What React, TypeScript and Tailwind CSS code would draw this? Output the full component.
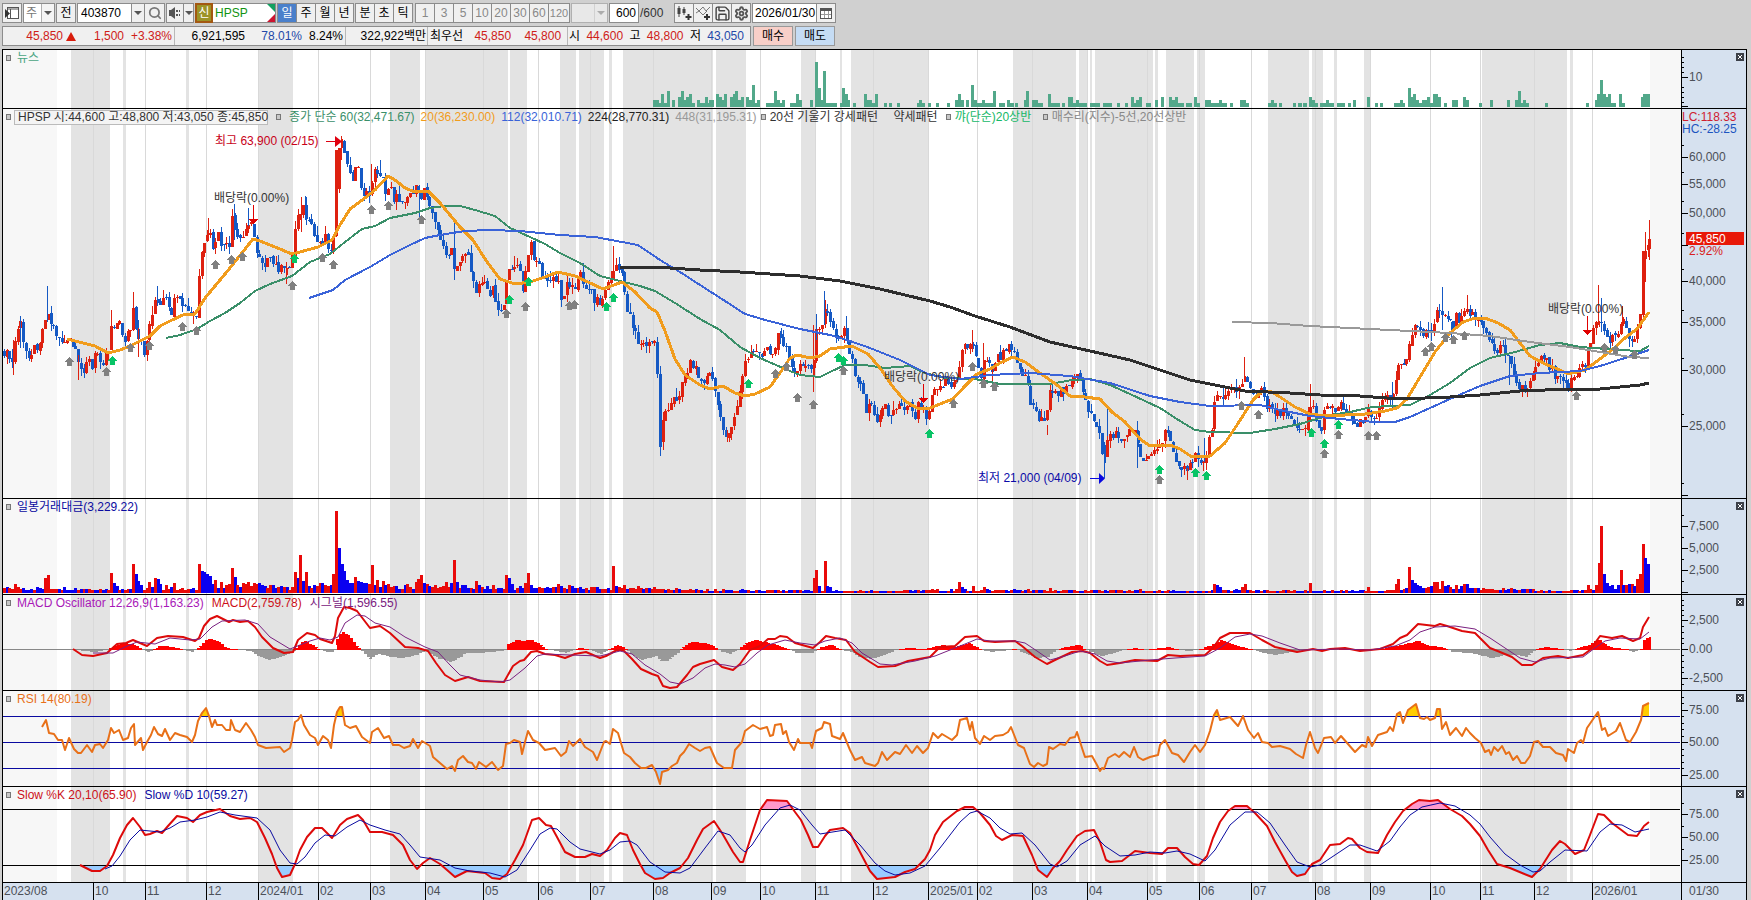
import React from "react";
import { Search, Settings, Save } from "lucide-react";

type Pt = [number, number];

const LEFT = 3;
const WIDTH = 1678;
const STEP = 2.7446;
const BARS = 600;

const parse = (text: string): Pt[] =>
  text
    .trim()
    .split(/\s+/)
    .map((pair) => pair.split(",").map(Number) as Pt);

const noise = (n: number) => {
  const v = Math.sin(n * 12.9898) * 43758.5453;
  return v - Math.floor(v);
};

const valueAt = (pts: Pt[], x: number) => {
  if (x <= pts[0][0]) return pts[0][1];
  for (let i = 1; i < pts.length; i++) {
    if (x <= pts[i][0]) {
      const [x0, y0] = pts[i - 1];
      const [x1, y1] = pts[i];
      return y0 + ((y1 - y0) * (x - x0)) / (x1 - x0 || 1);
    }
  }
  return pts[pts.length - 1][1];
};

const percent = (x: number) => `${((x - LEFT) / WIDTH) * 100}%`;

// shaded market phases: x start, x end
const BANDS = parse(`71,110 123,126 186,189 258,293 390,420 425,508 510,527 560,576 579,604 609,612
623,713 716,746 801,816 840,842 851,929 1013,1076 1079,1088 1090,1092 1095,1153 1155,1158 1166,1194
1197,1205 1268,1309 1312,1323 1334,1337 1364,1371 1482,1567 1570,1573`);

const MONTHS: [number, string][] = [
  [3, "2023/08"], [93, "10"], [145, "11"], [206, "12"], [258, "2024/01"], [318, "02"], [370, "03"],
  [425, "04"], [483, "05"], [538, "06"], [590, "07"], [653, "08"], [711, "09"], [760, "10"],
  [815, "11"], [873, "12"], [928, "2025/01"], [977, "02"], [1032, "03"], [1087, "04"], [1147, "05"],
  [1199, "06"], [1251, "07"], [1315, "08"], [1370, "09"], [1430, "10"], [1480, "11"], [1534, "12"],
  [1592, "2026/01"],
];

// x,width,height
const NEWS = `653,6,7 661,3,13 659,8,4 667,3,16 672,3,7 678,3,10 681,3,16 684,7,7 686,5,10 689,3,13 692,3,4
697,3,7 700,14,4 705,3,10 709,5,7 716,3,13 719,3,10 721,3,7 724,3,13 730,3,10 733,3,13 735,3,16 738,6,7
741,3,10 746,3,10 749,3,7 752,3,22 755,5,4 757,3,7 766,8,4 774,3,16 777,3,7 779,3,4 782,3,7 790,6,4
796,3,13 799,3,7 810,3,7 815,3,45 818,3,19 820,3,7 823,3,36 826,11,4 840,3,4 842,3,19 845,3,13 847,3,7
853,3,4 864,3,13 867,5,7 872,3,4 875,3,13 884,3,4 889,3,4 897,3,4 917,8,4 919,3,7 928,3,4 936,3,4
947,3,4 955,3,7 958,3,13 961,3,7 966,3,7 971,3,22 974,3,7 976,6,4 982,3,7 985,8,4 993,3,16 999,6,4
1007,3,7 1010,4,4 1015,3,4 1024,3,7 1026,3,16 1032,6,7 1038,5,4 1048,3,13 1051,9,4 1062,3,4 1068,5,10
1073,3,4 1076,3,7 1079,8,4 1090,6,4 1095,5,4 1103,9,4 1117,3,4 1125,3,4 1131,3,10 1134,3,4 1136,3,7
1139,3,10 1146,5,4 1155,3,7 1161,3,10 1169,3,10 1172,3,7 1175,3,10 1178,6,4 1186,6,4 1194,3,10 1197,3,4
1205,6,7 1211,8,4 1219,3,7 1222,5,4 1230,3,4 1240,6,7 1246,3,4 1268,3,4 1271,3,7 1274,3,4 1279,3,4
1293,3,4 1298,4,4 1303,4,4 1309,3,10 1312,3,7 1315,3,4 1320,6,4 1326,3,7 1329,5,4 1337,8,4 1348,3,4
1353,3,7 1367,3,10 1375,3,4 1380,3,4 1394,6,4 1400,3,7 1402,3,4 1408,3,19 1410,3,10 1413,3,13 1416,3,7
1419,3,4 1422,5,7 1427,3,10 1430,3,4 1433,5,13 1438,3,10 1444,3,4 1452,6,7 1463,3,10 1466,3,7 1479,3,4
1490,3,7 1507,3,7 1515,3,7 1518,3,16 1521,3,4 1523,3,7 1526,3,4 1545,3,4 1586,3,4 1595,3,7 1597,3,13
1600,3,27 1603,3,13 1605,3,10 1608,3,13 1611,5,4 1619,3,13 1622,3,4 1641,3,10 1643,7,13`
  .split(/\s+/)
  .map((bar) => bar.split(",").map(Number));

const PRICE = parse(`3,350 7,355 13,365 16,330 20,325 24,350 30,353 35,347 40,340 43,325 46,310 50,320 55,332
60,338 66,345 70,340 74,350 78,366 83,372 87,355 92,370 96,352 103,360 108,348 111,325 115,323 120,325
124,340 130,330 133,312 137,340 142,345 145,355 150,318 155,300 160,307 165,298 170,315 175,300 182,305
190,315 196,317 199,280 203,250 208,230 214,250 217,235 222,245 230,250 232,220 237,237 242,242 247,220
252,228 257,250 263,262 270,262 277,267 285,272 293,255 294,235 297,215 302,205 307,220 312,232 318,245
325,235 331,253 334,225 336,185 340,142 344,150 348,172 352,180 357,162 362,190 368,200 373,175 378,170
382,175 385,195 390,180 394,198 400,200 408,195 415,188 420,200 425,185 430,205 435,225 442,240 446,260
452,250 454,270 458,262 465,252 470,265 476,290 481,280 488,292 493,288 498,310 503,308 507,280 512,265
518,265 523,290 527,260 530,243 535,258 540,268 545,282 552,280 558,282 562,300 567,285 572,280 575,290
580,275 585,285 590,290 596,302 603,300 606,283 611,280 614,262 618,268 623,280 625,305 629,312 635,330
639,345 645,345 650,345 654,340 657,375 660,440 664,410 669,415 672,400 677,398 682,382 685,375 690,362
695,370 700,375 705,380 710,375 715,390 718,410 723,425 727,435 731,432 735,415 740,390 744,365 750,355
755,350 760,355 767,350 773,360 778,335 783,342 787,348 790,365 795,377 798,365 803,362 808,365 813,375
815,335 820,330 824,312 830,318 835,335 842,340 845,325 848,345 852,360 856,380 862,388 866,408 873,408
878,420 884,395 888,418 895,410 898,400 903,408 908,400 915,415 919,400 925,415 929,410 933,385 940,388
945,380 952,388 958,380 960,350 965,345 972,345 977,360 981,375 985,360 992,368 998,358 1005,352
1012,345 1015,350 1020,370 1026,375 1030,400 1035,410 1040,418 1047,415 1048,395 1055,395 1062,390
1065,385 1072,380 1078,377 1083,395 1086,408 1093,415 1098,430 1101,450 1105,455 1108,430 1112,438
1118,435 1125,440 1130,430 1136,425 1139,455 1145,458 1152,452 1158,450 1162,440 1167,432 1172,445
1177,460 1182,468 1187,475 1192,460 1197,457 1202,462 1207,450 1212,425 1216,390 1222,395 1228,388
1234,392 1240,385 1245,375 1250,388 1254,400 1260,390 1265,402 1272,408 1280,412 1290,415 1296,423
1303,430 1308,415 1311,400 1317,425 1322,428 1325,408 1331,402 1337,412 1341,402 1347,412 1355,424
1362,418 1367,415 1369,408 1375,420 1380,405 1387,398 1392,395 1397,370 1400,358 1405,365 1409,340
1414,325 1418,328 1422,340 1428,332 1434,325 1438,305 1443,320 1447,312 1451,330 1456,315 1462,322
1467,307 1473,315 1480,325 1486,335 1490,348 1497,350 1502,345 1508,358 1514,370 1518,388 1522,390
1527,388 1531,380 1536,358 1542,358 1548,365 1556,375 1562,382 1566,388 1571,380 1576,378 1580,365
1586,365 1589,345 1593,330 1598,320 1602,330 1608,340 1614,335 1620,325 1622,315 1627,335 1633,338
1637,325 1640,310 1643,260 1646,250 1649,240`);

// long shadows: x, top, bottom, rising
const SHADOWS: [number, number, number, boolean][] = [
  [13, 340, 375, true], [20, 316, 348, false], [47, 286, 322, false], [78, 355, 380, true], [111, 310, 345, true],
  [133, 292, 318, true], [138, 328, 357, true], [157, 286, 306, false], [208, 218, 240, true], [234, 204, 240, false],
  [248, 208, 226, false], [286, 262, 284, true], [301, 197, 232, true], [305, 196, 220, false],
  [341, 136, 160, true], [371, 164, 185, true], [380, 160, 176, false], [419, 185, 222, false],
  [454, 223, 280, false], [514, 256, 266, true], [613, 246, 280, true], [660, 383, 456, false], [727, 430, 442, true],
  [780, 331, 344, false], [813, 325, 392, true], [816, 314, 340, false], [824, 291, 325, false], [846, 316, 330, false],
  [972, 330, 352, true], [983, 343, 362, true], [992, 368, 382, true], [1047, 425, 435, true],
  [1104, 442, 478, false], [1107, 409, 436, false], [1137, 421, 468, false], [1187, 468, 480, true],
  [1204, 438, 462, false], [1244, 357, 380, true], [1310, 384, 420, true], [1392, 382, 408, false],
  [1442, 287, 330, false], [1451, 322, 340, false], [1467, 295, 310, true], [1509, 355, 385, false],
  [1598, 285, 325, true], [1601, 298, 332, false], [1622, 306, 322, true], [1645, 232, 282, true], [1649, 220, 260, true],
];

const AVERAGES = [
  {
    color: "#3a8f69",
    width: 2,
    points: `166,338 180,335 197,329 210,321 225,313 240,303 255,291 270,284 292,276 310,262 330,254 345,242
362,229 375,226 390,218 415,213 430,208 445,206 460,206 475,210 495,216 510,228 530,237 545,244 560,253
580,263 600,276 620,281 640,286 655,291 675,303 700,319 720,330 740,347 760,358 785,369 800,375 820,377
830,372 845,365 865,365 885,368 910,366 925,373 945,378 975,379 1000,384 1050,384 1072,380 1090,379
1110,385 1130,394 1160,408 1180,421 1195,430 1210,432 1250,433 1275,429 1300,424 1330,415 1350,412
1372,407 1410,405 1430,395 1450,383 1470,368 1490,358 1515,352 1540,345 1560,343 1580,347 1620,350
1640,351 1649,346`,
  },
  {
    color: "#f19c1c",
    width: 3,
    points: `67,339 75,341 95,346 108,353 120,350 130,346 150,336 160,326 170,321 183,315 195,314 205,298
230,268 253,239 260,241 280,249 292,254 300,252 318,247 332,240 340,225 350,209 365,198 375,190 388,176
395,180 405,188 415,192 428,191 440,203 460,227 473,240 487,262 500,279 515,284 530,282 545,277 558,272
575,276 588,282 603,289 622,282 635,292 650,308 657,312 665,331 675,359 685,375 700,385 710,389 723,386
735,393 745,396 755,394 770,387 780,373 790,358 797,355 810,358 820,356 830,349 852,346 868,354 880,368
893,387 905,401 917,408 930,408 940,404 953,399 965,386 977,374 990,369 1000,363 1013,357 1025,362
1040,373 1057,385 1070,396 1085,397 1100,399 1112,412 1125,422 1140,439 1150,446 1170,445 1180,449
1192,457 1210,456 1225,443 1237,425 1253,400 1262,391 1270,391 1280,397 1295,407 1310,414 1325,416
1345,415 1365,414 1385,411 1397,408 1407,399 1420,377 1435,352 1450,333 1463,322 1475,318 1485,318
1498,323 1510,330 1520,343 1530,356 1545,364 1560,370 1568,374 1585,370 1600,359 1612,350 1625,338
1637,329 1649,312`,
  },
  {
    color: "#3a63d8",
    width: 2,
    points: `309,298 333,290 345,280 370,267 390,255 410,245 425,238 440,235 465,231 490,230 520,231 560,235
595,237 638,245 660,260 680,272 700,285 725,301 745,314 765,320 800,329 830,335 850,341 870,348 900,360
930,375 960,379 990,375 1030,373 1070,376 1110,383 1150,396 1180,402 1210,406 1260,405 1280,410 1310,416
1340,419 1375,422 1395,422 1410,417 1430,408 1450,399 1480,386 1510,376 1540,373 1580,371 1600,366
1625,358 1649,350`,
  },
  {
    color: "#2d2d2d",
    width: 3,
    points: `620,267 655,267 700,270 740,272 800,276 840,281 880,289 930,301 950,307 975,316 1010,327
1050,342 1090,351 1130,360 1160,370 1190,380 1220,386 1245,391 1290,393 1320,395 1360,396 1400,399
1450,397 1480,395 1520,391 1570,389 1600,389 1640,385 1649,383`,
  },
  {
    color: "#999999",
    width: 2,
    points: `1232,322 1270,323 1310,326 1370,329 1410,331 1450,333 1490,336 1530,342 1570,347 1600,352
1630,357 1649,358`,
  },
];

const GREEN_MARKS = parse(`112,356 294,254 509,295 528,277 606,302 613,293 748,379 838,353 843,356 929,429
1159,465 1195,468 1206,471 1311,428 1324,439 1338,420`);

const GREY_MARKS = parse(`69,357 106,367 130,343 149,341 182,322 196,326 215,260 231,255 242,252 292,281
322,253 333,260 371,205 388,201 421,215 506,309 525,302 569,301 574,300 775,369 786,362 797,393 813,400
843,366 953,399 972,362 983,379 994,382 1159,475 1241,401 1258,410 1324,449 1338,430 1368,431 1376,431
1425,347 1431,342 1445,333 1453,335 1464,331 1576,391 1604,343 1615,345 1634,350`);

const VOLUME_BASE = parse(`3,5 60,5 100,4 145,5 190,4 230,7 260,8 290,5 340,10 400,6 440,7 500,5 540,6 580,5
650,5 700,3 900,2 930,3 990,3 1010,3 1200,2 1230,3 1300,2 1390,3 1420,5 1450,6 1500,4 1560,2 1585,3
1600,6 1649,7`);

const VOLUME_SPIKES = `14,9,r 44,15,r 47,18,r 111,20,r 114,10,b 117,7,b 133,29,r 136,19,b 139,12,b 142,8,b
149,11,r 154,15,r 157,14,b 160,9,b 165,8,r 174,10,r 198,29,r 201,22,b 204,21,b 207,19,b 210,17,b 213,9,b
216,13,r 220,11,r 231,25,r 234,16,b 243,10,r 248,11,r 254,10,r 260,10,b 264,7,b 294,21,r 297,15,b
300,38,r 303,12,b 305,21,r 308,7,b 334,19,r 336,82,r 339,45,b 342,29,b 345,22,b 348,13,b 350,10,b
355,16,r 358,12,b 361,11,b 364,10,b 371,28,r 377,13,r 382,12,r 385,8,b 407,9,r 416,11,r 418,14,r 421,18,r
424,10,b 427,9,r 445,11,r 450,10,b 454,33,r 457,11,b 476,12,r 479,8,b 492,8,r 506,18,r 509,15,b 512,9,b
525,10,r 528,20,r 531,8,b 558,9,r 561,7,b 570,8,r 613,27,r 616,7,b 624,8,r 638,7,r 813,15,r 816,23,r
819,7,b 824,32,r 827,7,b 830,6,b 959,11,r 962,6,b 965,4,b 972,7,r 983,6,r 1049,5,r 1139,4,r 1214,9,r
1217,8,b 1220,6,b 1241,6,r 1244,9,r 1310,10,r 1368,6,r 1395,9,r 1398,14,r 1409,26,r 1412,13,b 1415,10,b
1418,8,b 1421,7,b 1434,11,r 1437,11,r 1442,12,r 1445,7,b 1455,8,r 1464,9,r 1467,9,b 1587,8,r 1595,8,r
1598,30,r 1601,67,r 1604,19,b 1607,10,b 1610,7,b 1620,23,r 1623,8,b 1626,8,r 1637,14,r 1640,19,r
1643,49,r 1646,35,b 1649,29,b`
  .split(/\s+/)
  .map((spike) => {
    const [x, h, tone] = spike.split(",");
    return { slot: Math.round((Number(x) - 4) / STEP), h: Number(h), rising: tone === "r" };
  });

const MACD = `73,649 82,655 93,656 107,653 117,644 126,643 133,640 147,646 157,638 168,636 183,637 195,641
199,638 204,626 210,619 217,616 229,622 233,620 240,622 248,621 255,627 262,637 273,648 284,653 293,652
298,640 307,633 315,635 320,639 332,643 335,636 338,618 344,607 350,608 357,611 370,628 380,626 390,633
405,647 418,648 428,651 436,663 445,675 455,681 468,677 480,681 504,682 513,666 520,661 524,660 531,652
537,651 545,654 555,655 565,658 575,654 586,652 600,658 606,656 617,650 623,650 632,659 641,669 652,674
658,676 663,686 670,688 677,687 687,675 693,667 700,664 714,660 722,667 733,670 740,664 750,650 760,646
768,639 775,639 780,636 787,637 795,643 813,648 820,642 826,636 835,638 846,640 855,652 870,662 878,667
895,666 908,661 930,657 940,647 955,646 965,637 977,636 984,641 995,642 1015,641 1022,646 1035,657
1047,664 1057,659 1072,652 1083,651 1090,653 1100,661 1107,665 1120,663 1135,660 1157,661 1168,655
1180,656 1205,655 1213,648 1220,638 1230,633 1250,633 1262,640 1275,647 1297,652 1313,649 1322,651
1330,649 1345,648 1360,651 1380,649 1393,644 1400,638 1407,635 1418,624 1435,626 1440,624 1447,626
1462,631 1475,633 1490,648 1500,652 1512,657 1522,665 1532,665 1543,658 1558,656 1568,658 1583,655
1590,650 1600,636 1612,638 1622,636 1633,641 1640,638 1643,627 1649,617`;

const SIGNAL = `93,653 113,653 125,647 137,642 155,644 170,638 190,640 200,639 212,627 222,621 245,620 258,624
270,637 290,649 300,645 310,641 320,638 330,640 338,637 345,623 357,615 365,616 375,623 390,627 405,637
425,647 438,652 450,665 460,675 480,680 500,682 510,680 525,668 537,656 545,654 570,655 600,656 620,651
632,654 645,665 660,674 670,682 680,684 693,678 705,668 715,664 725,665 735,667 745,664 757,653 768,645
785,640 800,643 815,645 825,641 840,638 852,643 862,653 872,659 880,664 892,665 915,661 935,656 955,648
970,642 977,639 990,641 1015,641 1025,643 1037,651 1050,660 1065,656 1080,651 1095,654 1107,661 1120,663
1150,660 1175,658 1205,656 1220,648 1235,637 1250,634 1262,636 1280,643 1300,650 1340,649 1370,650
1395,646 1410,640 1420,632 1435,627 1455,626 1475,629 1490,638 1505,648 1520,658 1535,662 1550,658
1583,657 1595,648 1605,641 1620,638 1640,639 1649,632`;

// x, height over the zero line
const OSCILLATOR = parse(`73,0 93,-2 105,0 117,5 125,7 135,5 142,0 146,-2 152,0 158,4 165,4 175,2 183,0 190,-2
195,0 203,8 208,12 217,9 225,2 230,1 250,-1 257,-6 268,-10 280,-7 293,-1 296,4 303,9 312,5 318,0 330,-3
334,0 335,9 341,19 348,14 358,2 360,0 369,-9 376,-4 390,-7 402,-8 415,-5 425,-1 436,-8 450,-12 458,-8
465,-3 478,-3 500,-1 505,0 506,5 515,10 522,9 530,10 538,6 545,1 565,-3 572,0 580,2 590,0 600,-4 606,0
617,5 625,1 632,-6 640,-10 655,-6 660,-11 666,-11 678,-2 682,3 690,8 705,7 716,2 719,-1 728,-4 737,0
745,7 755,10 768,7 778,4 787,1 795,-3 812,-3 820,3 830,5 840,0 850,-2 858,-7 870,-9 880,-6 895,0 905,2
925,1 940,5 955,3 968,7 977,2 980,0 990,-2 1008,0 1015,1 1022,-3 1035,-8 1047,-7 1055,0 1065,3 1078,5
1085,0 1100,-6 1110,-4 1122,0 1133,2 1145,0 1167,3 1178,0 1187,-1 1200,1 1213,6 1220,10 1232,6 1240,3
1252,0 1262,-3 1275,-5 1295,-1 1310,1 1330,0 1345,1 1380,1 1395,4 1405,6 1417,9 1425,5 1440,3 1449,0
1450,-2 1470,-3 1490,-8 1505,-5 1515,-5 1525,-7 1533,-1 1535,1 1545,3 1560,1 1570,-1 1577,2 1590,6
1597,11 1605,5 1612,2 1625,1 1632,-2 1640,1 1643,10 1649,13`);

const RSI = `42,727 46,720 49,733 54,734 58,740 62,740 65,750 69,738 74,749 78,753 81,753 87,745 92,752 95,745
100,744 103,748 108,740 111,728 114,733 119,730 123,740 128,738 131,728 134,724 135,745 141,738 143,750
147,742 151,735 154,727 158,734 162,736 165,729 170,740 175,733 180,735 187,737 192,742 195,735 198,721
202,713 206,708 209,716 212,727 215,720 217,725 222,725 226,730 230,730 231,720 235,730 240,732 246,723
251,730 255,737 258,745 266,748 280,747 284,752 290,748 292,740 295,722 298,720 301,715 304,725 310,735
315,738 318,745 323,736 328,740 331,748 334,725 337,712 340,707 342,707 345,725 350,728 356,726 362,737
370,743 372,732 378,728 384,738 389,736 393,745 399,745 404,748 410,746 413,739 418,748 422,741 430,746
433,757 440,763 447,769 452,766 455,771 458,760 463,756 468,762 472,763 476,769 479,762 486,767 492,762
498,770 503,766 506,744 510,743 514,740 520,742 522,754 525,742 528,731 533,740 539,743 545,750 555,748
561,756 566,752 569,741 573,746 580,739 585,747 593,752 597,760 604,742 606,741 610,744 613,729 618,733
624,753 630,757 635,763 641,768 646,768 652,765 656,772 660,784 662,772 668,770 672,766 677,763 680,756
684,752 689,744 695,748 700,751 705,748 710,747 717,763 724,768 732,768 735,750 742,742 745,731 753,725
760,729 767,727 770,736 773,735 775,725 781,724 783,734 786,731 789,742 794,750 798,739 800,743 810,743
812,748 816,731 822,728 824,722 830,724 832,736 840,739 843,733 850,750 855,760 862,757 865,763 875,766
878,763 882,752 887,760 895,752 900,754 906,745 912,753 917,746 923,753 928,748 933,733 938,738 942,734
952,740 957,735 960,720 967,718 970,730 972,722 975,738 980,744 984,736 990,740 995,736 1003,735
1008,732 1011,727 1018,745 1024,748 1030,764 1034,767 1038,763 1043,766 1047,764 1049,747 1053,749
1060,744 1065,745 1070,738 1075,737 1077,732 1082,748 1085,757 1092,756 1097,765 1100,771 1102,768
1104,769 1108,758 1115,754 1119,757 1124,752 1130,757 1134,747 1138,757 1143,760 1150,757 1158,755
1160,745 1163,742 1165,740 1172,753 1178,755 1184,762 1190,752 1195,745 1200,752 1205,745 1210,731
1214,715 1217,710 1220,720 1230,717 1238,726 1243,716 1248,730 1254,738 1258,733 1262,742 1268,743
1272,747 1280,746 1290,749 1296,754 1303,758 1306,745 1310,732 1315,748 1318,753 1324,738 1331,737
1335,743 1341,736 1348,744 1355,752 1362,745 1366,747 1368,737 1372,746 1378,735 1387,732 1390,727
1393,731 1397,714 1400,712 1403,723 1408,710 1416,704 1420,718 1424,719 1427,717 1430,720 1435,718
1437,709 1440,709 1442,729 1446,722 1450,735 1456,728 1462,736 1466,728 1470,733 1475,738 1481,743
1485,752 1489,750 1491,755 1494,747 1498,751 1502,746 1506,754 1509,752 1513,760 1517,756 1521,763
1525,763 1530,756 1534,742 1538,741 1543,747 1550,747 1556,753 1563,755 1566,761 1568,749 1574,753
1577,743 1581,740 1583,743 1587,728 1598,712 1602,730 1605,728 1608,736 1616,731 1620,723 1626,740
1630,742 1636,732 1641,720 1643,706 1649,703`;

const SLOW_K = `80,865 88,869 92,871 100,871 107,866 113,855 120,838 127,825 133,818 140,827 145,835 150,834
157,831 162,833 168,826 177,816 187,818 193,822 200,815 207,812 220,809 230,816 240,819 250,818 257,822
265,838 272,854 277,868 282,877 290,875 295,864 300,850 307,837 315,828 322,828 332,838 340,825 347,819
358,815 363,820 370,832 382,832 393,835 403,845 410,860 417,869 423,863 430,858 440,864 447,870 455,877
467,871 485,873 492,878 500,879 507,874 515,860 523,845 532,820 539,818 546,825 551,826 557,837 565,852
575,857 585,857 592,854 600,856 607,850 615,838 620,833 627,835 633,850 640,864 645,873 655,879 663,878
670,873 680,868 688,858 697,840 703,829 714,821 722,833 733,852 740,862 743,862 750,840 760,810 767,800
787,801 795,812 801,820 808,835 813,847 818,847 825,836 830,830 843,828 850,833 860,852 870,871 877,879
895,877 905,872 915,869 925,859 930,850 935,835 943,822 957,811 965,807 973,807 980,813 990,825 996,836
1002,840 1012,835 1023,836 1032,855 1038,870 1047,877 1053,868 1060,861 1067,850 1077,836 1085,831
1094,830 1100,842 1106,860 1110,862 1122,861 1135,851 1150,853 1162,854 1168,848 1177,848 1185,857
1193,864 1199,865 1207,856 1213,838 1220,822 1228,811 1235,806 1247,806 1255,813 1267,826 1275,842
1285,860 1292,872 1297,876 1305,874 1312,864 1320,860 1330,845 1340,844 1348,838 1352,839 1360,848
1367,852 1378,853 1387,835 1395,822 1403,811 1412,804 1419,800 1430,801 1438,800 1450,809 1462,816
1470,824 1480,836 1488,850 1497,864 1510,868 1522,873 1532,877 1540,869 1552,850 1560,841 1565,844
1575,854 1584,850 1590,835 1598,814 1604,815 1612,823 1620,829 1628,835 1637,836 1644,826 1649,822`;

const SLOW_D = `105,869 112,866 120,856 130,840 140,830 160,832 170,828 180,822 195,820 207,817 220,812 235,815
257,818 270,830 280,850 290,863 297,864 305,857 315,843 325,835 335,836 347,827 360,820 370,825 385,830
400,834 410,845 420,857 440,860 455,868 470,871 490,873 505,877 517,870 530,850 540,834 550,828 557,829
570,842 580,849 600,854 610,850 620,842 630,841 637,845 650,862 665,872 680,873 690,868 705,848 718,831
730,835 740,848 745,852 752,845 765,825 780,808 790,805 800,810 812,825 820,834 845,830 860,845 875,863
885,871 895,875 910,873 925,866 940,848 960,822 970,813 977,811 990,818 1000,828 1010,834 1022,833
1035,845 1050,864 1057,867 1067,861 1080,845 1095,836 1105,846 1120,856 1135,855 1150,852 1165,853
1177,851 1190,854 1205,861 1215,850 1230,825 1245,812 1257,812 1270,823 1285,845 1297,862 1310,867
1320,865 1335,855 1350,845 1360,845 1377,851 1390,841 1400,827 1410,815 1422,807 1440,803 1455,806
1470,815 1480,824 1490,837 1505,854 1520,865 1533,872 1540,871 1550,862 1565,850 1587,851 1600,832
1610,824 1622,825 1635,832 1649,829`;

const RED = "#de2110";
const BLUE = "#1559c4";

const Candles = () => {
  const items = [];
  let previous = PRICE[0][1];
  for (let i = 0; i < BARS; i++) {
    const x = Math.round(4 + i * STEP);
    const close = valueAt(PRICE, x) + (noise(i + 1) - 0.5) * 11;
    const open = previous + (noise(i + 700) - 0.5) * 3;
    const top = Math.round(Math.min(open, close));
    const bottom = Math.max(Math.round(Math.max(open, close)), top + 1);
    const high = top - Math.round(noise(i + 1500) ** 2 * 9);
    const low = bottom + Math.round(noise(i + 2500) ** 2 * 8);
    const color = close < open ? RED : BLUE;
    items.push(
      <g key={i} fill={color}>
        <rect x={x} y={high} width={1} height={low - high} />
        <rect x={x - 1} y={top} width={3} height={bottom - top} />
      </g>
    );
    previous = close;
  }
  return <g>{items}</g>;
};

const VolumeBars = () => (
  <g>
    {Array.from({ length: BARS }, (_, i) => {
      const x = Math.round(4 + i * STEP);
      const spike = VOLUME_SPIKES.find((s) => s.slot === i);
      const h = spike ? spike.h : Math.max(2, Math.round(valueAt(VOLUME_BASE, x) * (0.6 + noise(i + 40) * 0.7)));
      const rising = spike ? spike.rising : noise(i + 90) > 0.52;
      return <rect key={i} x={x - 1} y={593 - h} width={3} height={h} fill={rising ? "#e90a0a" : "#0a00f0"} />;
    })}
  </g>
);

const Line = ({ points, color, width }: { points: string; color: string; width: number }) => (
  <polyline points={points} fill="none" stroke={color} strokeWidth={width} strokeLinejoin="round" />
);

const Level = ({ y, color }: { y: number; color: string }) => (
  <rect x={LEFT} y={y} width={WIDTH - 1} height={1} fill={color} />
);

// area between a curve and a level, cut to the part above or below that level
const Zone = ({ id, points, level, above, color }: { id: string; points: string; level: number; above: boolean; color: string }) => {
  const pts = parse(points);
  const closed = `${pts[0][0]},${level} ${points} ${pts[pts.length - 1][0]},${level}`;
  return (
    <g>
      <clipPath id={id}>
        <rect x={LEFT} y={above ? level - 300 : level} width={WIDTH} height={300} />
      </clipPath>
      <polygon points={closed} fill={color} clipPath={`url(#${id})`} />
    </g>
  );
};

const UpMark = ({ x, y, color }: { x: number; y: number; color: string }) => (
  <path d={`M${x + 0.5} ${y}l4.5 5h-2v4h-5v-4h-2z`} fill={color} />
);

const DownMark = ({ x, y, stem }: { x: number; y: number; stem: number }) => (
  <path d={`M${x} ${y}h1v${stem}h4.5l-5 5l-5 -5h4.5z`} fill="#e00000" />
);

type Tick = [number, string?];

const Axis = ({ top, height, ticks, minors, children }: { top: number; height: number; ticks: Tick[]; minors: number[]; children?: React.ReactNode }) => (
  <div className="relative w-[65px] shrink-0 border-l border-black bg-[#d6e1ef]">
    <svg width="64" height={height} viewBox={`0 ${top} 64 ${height}`} shapeRendering="crispEdges" className="block">
      {minors.map((y) => (
        <rect key={y} x={0} y={y} width={2} height={1} fill="#000" />
      ))}
      {ticks.map(([y, label]) => (
        <g key={y}>
          <rect x={0} y={y} width={6} height={1} fill="#000" />
          <text x={7} y={y + 4} fontSize={12} fill="#4c5058">
            {label}
          </text>
        </g>
      ))}
      {children}
    </svg>
    {top !== 109 && (
      <button
        type="button"
        aria-label="닫기"
        className="absolute top-[3px] right-[2px] flex h-2 w-2 items-center justify-center bg-[#3c4048] text-white"
      >
        <svg width="4" height="4" viewBox="0 0 4 4">
          <path d="M0 0l4 4M4 0l-4 4" stroke="currentColor" />
        </svg>
      </button>
    )}
  </div>
);

const Bullet = () => <span className="h-[6px] w-[5px] shrink-0 border border-[#777] bg-[#c8c8c8]" />;

interface PanelProps {
  title: string;
  top: number;
  height: number;
  ticks: Tick[];
  minors: number[];
  legend: React.ReactNode;
  notes?: React.ReactNode;
  axis?: React.ReactNode;
  children: React.ReactNode;
}

const Panel = ({ title, top, height, ticks, minors, legend, notes, axis, children }: PanelProps) => (
  <section aria-label={title} className="flex border-t border-black">
    <div className="relative min-w-0 flex-1 overflow-hidden bg-white">
      <svg
        width="100%"
        height={height}
        viewBox={`${LEFT} ${top} ${WIDTH} ${height}`}
        preserveAspectRatio="none"
        className="block"
      >
        <g shapeRendering="crispEdges">
          <rect x={3} y={top} width={54} height={height} fill="#f7f7f7" />
          <rect x={1650} y={top} width={31} height={height} fill="#f7f7f7" />
          {BANDS.map(([from, to]) => (
            <rect key={from} x={from} y={top} width={to - from} height={height} fill="#e3e3e3" />
          ))}
          {MONTHS.slice(1).map(([x]) => (
            <rect key={x} x={x} y={top} width={1} height={height} fill="#d9d9d9" />
          ))}
        </g>
        {children}
      </svg>
      <div className="absolute top-0 left-[3px] flex h-4 items-center gap-1 whitespace-nowrap">
        <Bullet />
        {legend}
      </div>
      {notes}
    </div>
    <Axis top={top} height={height} ticks={ticks} minors={minors}>
      {axis}
    </Axis>
  </section>
);

const Note = ({ x, y, top, className, children }: { x: number; y: number; top: number; className: string; children: React.ReactNode }) => (
  <span className={`absolute leading-4 whitespace-nowrap ${className}`} style={{ left: percent(x), top: y - top - 8 }}>
    {children}
  </span>
);

const Box = ({ label, active, className = "", children }: { label: string; active?: boolean; className?: string; children: React.ReactNode }) => (
  <button
    type="button"
    aria-label={label}
    className={`flex h-5 shrink-0 items-center justify-center border border-[#8c8c8c] ${
      active ? "bg-[#4a80cb] text-white" : "bg-[#f0f0f0] text-[#444]"
    } ${className}`}
  >
    {children}
  </button>
);

const Arrow = () => <span className="h-0 w-0 border-x-4 border-t-4 border-x-transparent border-t-[#555]" />;

const PERIODS = ["일", "주", "월", "년"];
const UNITS = ["분", "초", "틱"];
const MINUTES = ["1", "3", "5", "10", "20", "30", "60"];

const Toolbar = () => (
  <div className="flex h-5 items-center gap-px">
    <Box label="창 목록" className="w-5">
      <svg width="14" height="14" viewBox="0 0 14 14" fill="none">
        <rect x="2.5" y="1.5" width="11" height="11" fill="#fff" stroke="#555" />
        <path d="M2 3h12M5.500 3v9" stroke="#555" />
        <path d="M0 3l5 4.500l-5 4.500z" fill="#333" />
      </svg>
    </Box>
    <label className="flex h-5 w-8 border border-[#8c8c8c] bg-white">
      <span className="sr-only">종류</span>
      <select className="w-[17px] appearance-none bg-white pl-[2px] text-[#777]">
        <option>주</option>
      </select>
      <span className="flex flex-1 items-center justify-center border-l border-[#b0b0b0] bg-[#f4f4f4]">
        <Arrow />
      </span>
    </label>
    <Box label="전" className="w-5">
      <span className="text-black">전</span>
    </Box>
    <div className="flex">
      <input
        aria-label="종목코드"
        defaultValue="403870"
        className="h-5 w-[54px] border border-r-0 border-[#8c8c8c] bg-white px-[3px] text-black outline-none"
      />
      <Box label="종목 목록" className="w-[14px]">
        <Arrow />
      </Box>
      <Box label="검색" className="w-5 border-l-0">
        <Search size={14} color="#777" strokeWidth={3} />
      </Box>
    </div>
    <div className="flex">
      <Box label="소리" className="w-[18px]">
        <svg width="14" height="14" viewBox="0 0 14 14" fill="#555">
          <path d="M1 4h2l4 -3v12l-4 -3h-2z" />
          <path d="M8 4h2v2h-2zM8 8h2v2h-2zM11 4h1v2h-1zM11 8h1v2h-1z" />
        </svg>
      </Box>
      <Box label="소리 설정" className="w-[10px] border-l-0">
        <Arrow />
      </Box>
    </div>
    <div className="relative flex h-5 w-[81px] border border-[#8c8c8c] bg-white">
      <span className="-my-px -ml-px flex w-[18px] items-center justify-center border-2 border-[#a35812] bg-[#9c9426] text-white">신</span>
      <input
        aria-label="종목명"
        defaultValue="HPSP"
        className="w-0 min-w-0 flex-1 bg-transparent pl-[2px] text-[#119311] outline-none"
      />
      <svg width="8" height="18" viewBox="0 0 8 18" className="absolute top-0 right-0">
        <path d="M0 0h8v8z" fill="#12a060" />
        <path d="M8 10v8h-8z" fill="#cc1430" />
      </svg>
    </div>
    <div className="flex">
      {PERIODS.map((period, i) => (
        <Box key={period} label={period} active={i === 0} className={i === 0 ? "w-5" : "w-[19px] border-l-0"}>
          <span className={i === 0 ? "text-white" : "text-black"}>{period}</span>
        </Box>
      ))}
    </div>
    <div className="flex pr-[2px]">
      {UNITS.map((unit) => (
        <Box key={unit} label={unit} className="-mr-px w-5">
          <span className="text-black">{unit}</span>
        </Box>
      ))}
    </div>
    <div className="flex">
      {MINUTES.map((minute) => (
        <Box key={minute} label={minute} className="-mr-px w-5">
          <span className="text-[#888]">{minute}</span>
        </Box>
      ))}
      <Box label="120" className="w-[22px]">
        <span className="text-[11px] text-[#888]">120</span>
      </Box>
    </div>
    <label className="flex h-5 w-[37px] border border-[#b0b0b0] bg-[#e8e8e8]">
      <span className="sr-only">분 단위</span>
      <select disabled className="w-[22px] appearance-none">
        <option></option>
      </select>
      <span className="flex flex-1 items-center justify-center border-l border-[#b0b0b0] opacity-40">
        <Arrow />
      </span>
    </label>
    <div className="flex items-center">
      <input
        aria-label="조회 개수"
        defaultValue="600"
        className="h-5 w-[30px] border border-[#8c8c8c] bg-white px-[2px] text-right text-black outline-none"
      />
      <span className="ml-px w-[33px] text-[#333]">/600</span>
    </div>
    <div className="flex">
      <Box label="차트 종류" className="-mr-px w-5">
        <svg width="16" height="16" viewBox="0 0 16 16">
          <path d="M3 1v11M8 2v8" stroke="#444" />
          <path d="M1.500 3h3v6h-3zM6.500 4h3v4h-3z" fill="#444" />
          <path d="M12.500 9v6M9.500 12h6" stroke="#333" strokeWidth="2" />
        </svg>
      </Box>
      <Box label="지표 추가" className="-mr-px w-5">
        <svg width="16" height="16" viewBox="0 0 16 16" fill="none">
          <path d="M1 3l3 3l4 -4l3 4l4 -4M1 8l3 -2l4 4l4 -4" stroke="#777" />
          <path d="M12 9v6M9 12h6" stroke="#333" strokeWidth="2" />
        </svg>
      </Box>
      <Box label="저장" className="-mr-px w-5">
        <Save size={17} color="#444" strokeWidth={2} className="shrink-0" />
      </Box>
      <Box label="설정" className="w-5">
        <Settings size={15} color="#555" strokeWidth={3} />
      </Box>
    </div>
    <div className="flex">
      <input
        aria-label="조회일"
        defaultValue="2026/01/30"
        className="h-5 w-[65px] border border-[#8c8c8c] bg-white pl-[2px] text-black outline-none"
      />
      <Box label="달력" className="w-[19px] border-l-0">
        <svg width="12" height="12" viewBox="0 0 12 12">
          <rect x="0.5" y="1.5" width="11" height="10" fill="#fff" stroke="#555" />
          <path d="M0 1h12v3h-12z" fill="#555" />
          <path d="M1 7.500h10M4.500 4v7M8.500 4v7" stroke="#999" />
        </svg>
      </Box>
    </div>
  </div>
);

const Quote = () => (
  <div className="flex h-5 items-center gap-[2px] text-black">
    <div className="flex h-5 w-[749px] items-center border border-[#8c8c8c] bg-[#f0f0f0] whitespace-nowrap">
      <div className="flex h-full w-[172px] items-center border-r border-[#b8b8b8] text-[#cf2018]">
        <span className="w-[60px] text-right">45,850</span>
        <svg width="10" height="9" viewBox="0 0 10 9" className="mx-[3px]">
          <path d="M5 0l5 9h-10z" fill="#d81c0c" />
        </svg>
        <span className="w-[45px] text-right">1,500</span>
        <span className="w-12 text-right">+3.38%</span>
      </div>
      <div className="flex h-full w-[171px] items-center border-r border-[#b8b8b8]">
        <span className="w-[70px] text-right">6,921,595</span>
        <span className="w-[57px] text-right text-[#2348a8]">78.01%</span>
        <span className="w-[41px] text-right">8.24%</span>
      </div>
      <div className="flex h-full w-[82px] items-center justify-end border-r border-[#b8b8b8] pr-px">322,922백만</div>
      <div className="flex h-full w-[140px] items-center border-r border-[#b8b8b8] pl-[2px]">
        최우선
        <span className="w-[48px] text-right text-[#cf2018]">45,850</span>
        <span className="w-[50px] text-right text-[#cf2018]">45,800</span>
      </div>
      <div className="flex flex-1 items-center justify-between pr-[6px] pl-px">
        시<span className="text-[#cf2018]">44,600</span>
        고<span className="text-[#cf2018]">48,800</span>
        저<span className="text-[#2348a8]">43,050</span>
      </div>
    </div>
    <button type="button" className="h-5 w-10 border border-[#999] bg-[#f8cfc8]">
      매수
    </button>
    <button type="button" className="h-5 w-10 border border-[#999] bg-[#c5dcf4]">
      매도
    </button>
  </div>
);

const steppedOscillator = Array.from({ length: 575 }, (_, i) => {
  const x = Math.round(73 + i * STEP);
  const y = 650 - Math.round(valueAt(OSCILLATOR, x));
  return `${x},${y} ${x + 3},${y}`;
}).join(" ");

const App = () => {
  return (
    <div className="min-h-screen min-w-[1250px] bg-[#d0d0d0] text-xs [font-family:'Liberation_Sans','Noto_Sans_CJK_KR',sans-serif]">
      <header className="flex flex-col gap-[3px] py-[3px] pl-[2px]">
        <Toolbar />
        <Quote />
      </header>

      <main className="mr-1 ml-[2px] border-x border-black">
        <Panel
          title="뉴스"
          top={50}
          height={58}
          ticks={[[77, "10"], [106]]}
          minors={[57, 62, 67, 72, 87, 92, 97, 102]}
          legend={<span className="pl-[2px] text-[#4aa584]">뉴스</span>}
        >
          <g fill="#52a88a" shapeRendering="crispEdges">
            {NEWS.map(([x, w, h], i) => (
              <rect key={i} x={x} y={107 - h} width={w} height={h} />
            ))}
          </g>
        </Panel>

        <Panel
          title="HPSP"
          top={109}
          height={389}
          ticks={[[157, "60,000"], [184, "55,000"], [213, "50,000"], [245], [281, "40,000"], [322, "35,000"], [370, "30,000"], [426, "25,000"], [495]]}
          minors={[145, 172, 201, 233, 269, 310, 358, 414, 483]}
          axis={
            <>
              <text x={0} y={121} fontSize={12} fill="#cf2030">LC:118.33</text>
              <text x={0} y={133} fontSize={12} fill="#1c55c0">HC:-28.25</text>
              <rect x={4} y={232} width={58} height={13} fill="#e81808" />
              <text x={7} y={243} fontSize={12} fill="#fff">45,850</text>
              <text x={7} y={255} fontSize={12} fill="#d81c20">2.92%</text>
            </>
          }
          legend={
            <>
              <span className="mr-1 -ml-px h-[15px] w-[254px] border border-[#bbb] bg-[#f4f4f4] pl-[3px] leading-[13px] text-[#333]">
                HPSP 시:44,600 고:48,800 저:43,050 종:45,850
              </span>
              <Bullet />
              <span className="flex gap-[6px] pl-1">
                <span className="text-[#3a8f69]">종가 단순 60(32,471.67)</span>
                <span className="text-[#f19c1c]">20(36,230.00)</span>
                <span className="text-[#3a63d8]">112(32,010.71)</span>
                <span className="text-[#222]">224(28,770.31)</span>
                <span className="text-[#999]">448(31,195.31)</span>
              </span>
              <Bullet />
              <span className="flex w-[172px] justify-between text-[#333]">
                <span>20선 기울기 강세패턴</span>
                <span className="pr-1">약세패턴</span>
              </span>
              <Bullet />
              <span className="w-[84px] text-[#16b868]">꺄(단순)20상반</span>
              <Bullet />
              <span className="text-[#888]">매수리(지수)-5선,20선상반</span>
            </>
          }
          notes={
            <>
              <Note x={215} y={141} top={109} className="text-[#c80018]">최고 63,900 (02/15)</Note>
              <Note x={214} y={198} top={109} className="text-[#333]">배당락(0.00%)</Note>
              <Note x={884} y={377} top={109} className="text-[#333]">배당락(0.00%)</Note>
              <Note x={1548} y={309} top={109} className="text-[#333]">배당락(0.00%)</Note>
              <Note x={978} y={478} top={109} className="text-[#0a0aa8]">최저 21,000 (04/09)</Note>
            </>
          }
        >
          <g shapeRendering="crispEdges">
            <Candles />
            {SHADOWS.map(([x, y0, y1, rising]) => (
              <rect key={x} x={x} y={y0} width={1} height={y1 - y0} fill={rising ? RED : BLUE} />
            ))}
            <rect x={335} y={150} width={3} height={68} fill={RED} />
            <rect x={659} y={385} width={3} height={62} fill={BLUE} />
            <rect x={1642} y={251} width={3} height={48} fill={RED} />
            <rect x={1648} y={239} width={3} height={10} fill={RED} />
            {AVERAGES.map((line) => (
              <Line key={line.color} {...line} />
            ))}
            {GREY_MARKS.map(([x, y]) => (
              <UpMark key={`${x}-${y}`} x={x} y={y} color="#808080" />
            ))}
            {GREEN_MARKS.map(([x, y]) => (
              <UpMark key={`${x}-${y}`} x={x} y={y} color="#08c466" />
            ))}
            <DownMark x={253} y={205} stem={14} />
            <DownMark x={923} y={384} stem={14} />
            <DownMark x={1587} y={316} stem={14} />
          </g>
          <path d="M326 141h9v-5l7 5.500l-7 5.500v-5h-9z" fill="#e00010" />
          <path d="M1090 478h9v-5l6 5.500l-6 5.500v-5h-9z" fill="#0808e0" />
        </Panel>

        <Panel
          title="일봉거래대금"
          top={499}
          height={95}
          ticks={[[526, "7,500"], [548, "5,000"], [570, "2,500"], [592]]}
          minors={[515, 537, 559, 581]}
          legend={<span className="pl-[2px] text-[#0a0aa0]">일봉거래대금(3,229.22)</span>}
        >
          <g shapeRendering="crispEdges">
            <VolumeBars />
          </g>
        </Panel>

        <Panel
          title="MACD"
          top={595}
          height={95}
          ticks={[[620, "2,500"], [649, "0.00"], [678, "-2,500"]]}
          minors={[600, 605, 610, 615, 626, 632, 638, 643, 655, 661, 667, 672, 684]}
          legend={
            <span className="flex gap-2 pl-[2px]">
              <span className="text-[#a818b8]">MACD Oscillator 12,26,9(1,163.23)</span>
              <span className="text-[#cc1018]">MACD(2,759.78)</span>
              <span className="text-[#7a2080]">시그널(1,596.55)</span>
            </span>
          }
        >
          <g shapeRendering="crispEdges">
            <Level y={649} color="#888" />
            <Zone id="osc-up" points={steppedOscillator} level={650} above color="#ff0000" />
            <Zone id="osc-down" points={steppedOscillator} level={650} above={false} color="#999999" />
          </g>
          <Line points={MACD} color="#dd0a0a" width={2} />
          <Line points={SIGNAL} color="#7a2080" width={1} />
        </Panel>

        <Panel
          title="RSI"
          top={691}
          height={95}
          ticks={[[710, "75.00"], [742, "50.00"], [775, "25.00"]]}
          minors={[697, 703, 716, 723, 729, 736, 749, 755, 762, 768]}
          legend={<span className="pl-[2px] text-[#e87018]">RSI 14(80.19)</span>}
        >
          <Zone id="rsi-high" points={RSI} level={716} above color="#ffcc00" />
          <Zone id="rsi-low" points={RSI} level={769} above={false} color="#99ccff" />
          <Level y={716} color="#0a0aa0" />
          <Level y={742} color="#0a0aa0" />
          <Level y={768} color="#0a0aa0" />
          <Line points={RSI} color="#e87018" width={2} />
        </Panel>

        <Panel
          title="Slow"
          top={787}
          height={95}
          ticks={[[814, "75.00"], [837, "50.00"], [860, "25.00"]]}
          minors={[803, 826, 849]}
          legend={
            <span className="flex gap-2 pl-[2px]">
              <span className="text-[#cc1018]">Slow %K 20,10(65.90)</span>
              <span className="text-[#0a0aa0]">Slow %D 10(59.27)</span>
            </span>
          }
        >
          <Zone id="slow-high" points={SLOW_K} level={809} above color="#ff99cc" />
          <Zone id="slow-low" points={SLOW_K} level={865} above={false} color="#99ccff" />
          <Level y={809} color="#000" />
          <Level y={865} color="#000" />
          <Line points={SLOW_K} color="#dd0a0a" width={2} />
          <Line points={SLOW_D} color="#0a0aa0" width={1} />
        </Panel>

        <div className="flex h-[18px] border-t border-black bg-[#d6e1ef] text-[#4c5058]">
          <div className="relative flex-1 overflow-hidden">
            {MONTHS.map(([x, label], i) => (
              <span
                key={x}
                className={`absolute top-0 h-full pl-px leading-4 ${i > 0 ? "border-l border-black" : ""}`}
                style={{ left: percent(x) }}
              >
                {label}
              </span>
            ))}
          </div>
          <div className="w-[65px] border-l border-black pl-[7px] leading-4">01/30</div>
        </div>
      </main>
    </div>
  );
};

export default App;
